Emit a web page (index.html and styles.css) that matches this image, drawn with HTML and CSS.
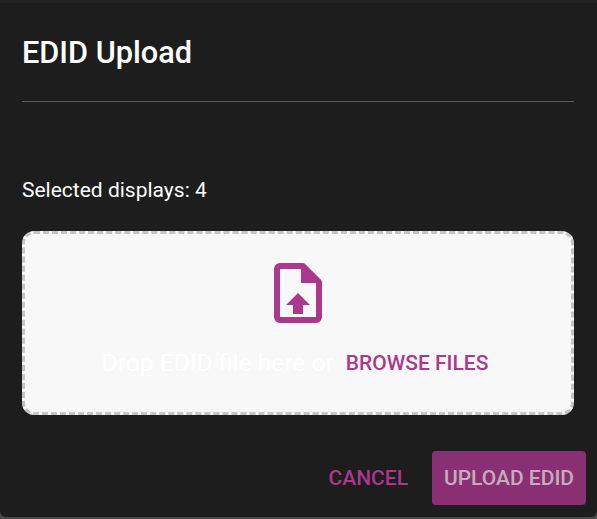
FILE: index.html
```html
<!DOCTYPE html>
<html lang="en">
<head>
<meta charset="utf-8">
<title>EDID Upload</title>
<link rel="stylesheet" href="styles.css">
</head>
<body>
<div class="dialog">
  <h2 class="title">EDID Upload</h2>
  <hr class="divider">
  <p class="selected">Selected displays: 4</p>
  <div class="dropzone">
    <svg class="file-icon" viewBox="0 0 48 60" width="48" height="60" aria-hidden="true">
      <path class="file-outline" d="M6 3H29L45 19V54a3 3 0 0 1-3 3H6a3 3 0 0 1-3-3V6a3 3 0 0 1 3-3Z"/>
      <path class="file-fold" d="M27 3H30L45 18V20H27Z"/>
      <path class="file-arrow" d="M24 30L36 42H29V51H19V42H12Z"/>
    </svg>
    <div class="drop-row">
      <span class="drop-text">Drop EDID file here or</span>
      <button class="browse">BROWSE FILES</button>
    </div>
  </div>
  <div class="actions">
    <button class="cancel">CANCEL</button>
    <button class="upload">UPLOAD EDID</button>
  </div>
</div>
</body>
</html>
```

FILE: styles.css
```css
html, body {
  margin: 0;
  padding: 0;
  background: #4a4a4a;
}
body {
  width: 597px;
  height: 519px;
  overflow: hidden;
  font-family: Roboto, "Liberation Sans", sans-serif;
}
.dialog {
  box-sizing: border-box;
  width: 597px;
  height: 517px;
  background: #1d1d1d;
  border-top: 3px solid #222222;
  border-radius: 0 0 6px 6px;
  padding: 0 23px 0 22px;
  display: flex;
  flex-direction: column;
}
.title {
  margin: 34px 0 0;
  font-size: 30.7px;
  line-height: 32px;
  font-weight: 500;
  color: #fff;
}
.divider {
  margin: 32px 0 0;
  border: 0;
  height: 1px;
  background: #5c5c5c;
}
.selected {
  margin: 76px 0 0;
  font-size: 21px;
  line-height: 24px;
  color: #fff;
}
.dropzone {
  box-sizing: border-box;
  margin-top: 29px;
  height: 184px;
  background: #f8f8f9;
  border: 3px dashed #c4c4c4;
  border-radius: 12px;
  display: flex;
  flex-direction: column;
  align-items: center;
}
.file-icon {
  margin-top: 29px;
  display: block;
}
.file-outline {
  fill: none;
  stroke: #aa388d;
  stroke-width: 6;
  stroke-linejoin: round;
}
.file-fold, .file-arrow {
  fill: #aa388d;
}
.drop-row {
  margin-top: 26px;
  padding-right: 6px;
  display: flex;
  align-items: center;
  gap: 12px;
}
.drop-text {
  font-size: 24.6px;
  line-height: 28px;
  color: #fff;
}
button {
  font-family: inherit;
  border: 0;
  background: none;
  padding: 0;
  font-weight: 500;
}
.browse {
  font-size: 21px;
  line-height: 28px;
  color: #aa388d;
}
.actions {
  margin-top: 36px;
  display: flex;
  justify-content: flex-end;
  align-items: center;
  gap: 24px;
  margin-right: -12px;
}
.cancel {
  font-size: 21px;
  color: #aa388d;
}
.upload {
  width: 154px;
  height: 54px;
  border-radius: 4px;
  background: #8a2f73;
  color: #c2adbc;
  font-size: 21px;
}
```
